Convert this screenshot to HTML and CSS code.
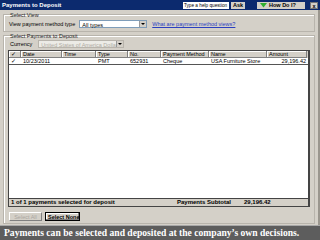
FILE: index.html
```html
<!DOCTYPE html>
<html lang="en">
<head>
	<meta charset="UTF-8">
	<title>Payments to Deposit</title>
	<link rel="stylesheet" href="styles.css">
</head>
<body>
	<div class="win">
		<div class="titlebar">
			<span class="title">Payments to Deposit</span>
			<span class="help">Type a help question</span>
			<span class="ask">Ask</span>
			<span class="howdo">
				<svg width="7" height="5" viewBox="0 0 7 5"><path d="M0 0 H7 L3.5 4.5 Z" fill="#2fae2f"/></svg>
				How Do I?
			</span>
			<span class="close">x</span>
		</div>
		<div class="body">
			<div class="group view">
				<div class="legend">Select View</div>
				<div class="row">
					<span>View payment method type</span>
					<span class="select">All types<i class="arrow"></i></span>
					<a class="link" href="#">What are payment method views?</a>
				</div>
			</div>
			<div class="group pay">
				<div class="legend">Select Payments to Deposit</div>
				<div class="row cur">
					<span>Currency</span>
					<span class="select off">United States of America Dollar<i class="arrow"></i></span>
				</div>
				<div class="grid">
					<div class="tr head">
						<span class="c0">&#10003;</span>
						<span class="c1">Date</span>
						<span class="c2">Time</span>
						<span class="c3">Type</span>
						<span class="c4">No.</span>
						<span class="c5">Payment Method</span>
						<span class="c6">Name</span>
						<span class="c7">Amount</span>
					</div>
					<div class="tr item">
						<span class="c0">&#10003;</span>
						<span class="c1">10/23/2011</span>
						<span class="c2"></span>
						<span class="c3">PMT</span>
						<span class="c4">652931</span>
						<span class="c5">Cheque</span>
						<span class="c6">USA Furniture Store</span>
						<span class="c7 num">29,196.42</span>
					</div>
					<div class="blank"></div>
					<div class="summary">
						<span class="count">1 of 1 payments selected for deposit</span>
						<span class="sub">Payments Subtotal</span>
						<span class="total">29,196.42</span>
					</div>
				</div>
				<div class="btns">
					<span class="btn off">Select All</span>
					<span class="btn on">Select <u>N</u>one</span>
				</div>
			</div>
		</div>
		<div class="caption">Payments can be selected and deposited at the company’s own decisions.</div>
	</div>
</body>
</html>
```
FILE: styles.css
```css
body{
	margin: 0;
	background: #d4d0c8;
	font-family: "Liberation Sans", Arial, sans-serif;
	font-size: 5.5px;
	color: #000;
}
.win{
	width: 320px;
	height: 240px;
	display: flex;
	flex-direction: column;
	overflow: hidden;
}
.titlebar{
	height: 10px;
	background: #0c2a6e;
	display: flex;
	align-items: center;
	padding: 0 2px;
	gap: 2px;
	white-space: nowrap;
}
.title{
	color: #fff;
	font-weight: bold;
	font-size: 6px;
	flex: 1;
}
.help{
	background: #fff;
	width: 46px;
	height: 7px;
	line-height: 7px;
	padding-left: 1px;
	box-sizing: border-box;
	font-size: 4.7px;
	overflow: hidden;
}
.ask{
	background: #d4d0c8;
	font-weight: bold;
	height: 7px;
	line-height: 7px;
	padding: 0 2px;
	margin-right: 10px;
}
.howdo{
	background: #d4d0c8;
	font-weight: bold;
	height: 7px;
	width: 48px;
	display: flex;
	align-items: center;
	gap: 2px;
	padding-left: 3px;
	box-sizing: border-box;
}
.close{
	background: #d4d0c8;
	width: 8px;
	height: 7px;
	line-height: 6px;
	text-align: center;
	margin-left: 3px;
	border: 1px solid #777;
	box-sizing: border-box;
	font-weight: bold;
}
.body{
	flex: 1;
	padding: 4px 3px 1px 3px;
	display: flex;
	flex-direction: column;
	gap: 3px;
	border-right: 2px solid #9a968e;
}
.group{
	border: 1px solid #b8b4ac;
	box-shadow: inset 1px 1px 0 #fff;
	padding: 0 4px 1px 4px;
}
.legend{
	margin-top: -3px;
	height: 7px;
	line-height: 7px;
	padding-left: 2px;
	color: #222;
}
.row{
	display: flex;
	align-items: center;
	gap: 4px;
	padding: 1px 0 2px 1px;
	white-space: nowrap;
}
.select{
	background: #fff;
	border: 1px solid #7f9db9;
	width: 68px;
	height: 8px;
	line-height: 8px;
	padding-left: 2px;
	box-sizing: border-box;
	position: relative;
}
.select .arrow{
	position: absolute;
	right: 0;
	top: 0;
	width: 6px;
	height: 6px;
	background: #d4d0c8;
	border-left: 1px solid #999;
}
.select .arrow:after{
	content: "";
	position: absolute;
	left: 1px;
	top: 2px;
	border-left: 2px solid transparent;
	border-right: 2px solid transparent;
	border-top: 2px solid #000;
}
.select.off{
	width: 86px;
	color: #b0aca4;
	border-color: #b8b4ac;
	background: #ecebe6;
}
.link{
	color: #2a3fc0;
	margin-left: 1px;
}
.pay{
	flex: 1;
	display: flex;
	flex-direction: column;
}
.cur{
	gap: 6px;
	padding: 0 0 2px 2px;
}
.grid{
	flex: 1;
	background: #fff;
	border: 1px solid #444;
	border-right-width: 2px;
	display: flex;
	flex-direction: column;
}
.tr{
	display: flex;
	height: 7px;
	line-height: 7px;
}
.tr span{
	padding-left: 2px;
	box-sizing: border-box;
	overflow: hidden;
	white-space: nowrap;
}
.head{
	background: #d4d0c8;
}
.head span{
	border-right: 1px solid #808080;
	border-bottom: 1px solid #808080;
	box-shadow: inset 1px 1px 0 #fff;
}
.item{
	border-bottom: 1px solid #555;
	height: 6px;
	line-height: 6px;
}
.c0{ width: 12px; }
.c1{ width: 41px; }
.c2{ width: 34px; }
.c3{ width: 32px; }
.c4{ width: 33px; }
.c5{ width: 48px; }
.c6{ width: 58px; }
.c7{ width: 40px; }
.num{
	text-align: right;
	padding-right: 1px;
}
.blank{
	flex: 1;
}
.summary{
	background: #d4d0c8;
	height: 7px;
	line-height: 7px;
	display: flex;
	font-weight: bold;
	font-size: 6px;
	border-top: 1px solid #444;
	white-space: nowrap;
}
.count{
	width: 166px;
	padding-left: 2px;
}
.sub{
	width: 67px;
}
.btns{
	display: flex;
	gap: 3px;
	padding: 5px 0 1px 1px;
	white-space: nowrap;
}
.btn{
	height: 9px;
	line-height: 8px;
	padding: 0 2px;
	box-sizing: border-box;
	text-align: center;
	border: 1px solid #fff;
	border-right-color: #808080;
	border-bottom-color: #808080;
}
.btn.off{
	width: 33px;
	color: #aaa6a0;
}
.btn.on{
	width: 35px;
	font-weight: bold;
	border: 1px solid #000;
	box-shadow: inset -1px -1px 0 #808080, inset 1px 1px 0 #fff;
}
.caption{
	height: 14px;
	line-height: 14px;
	background: #5d5d5d;
	border-top: 1px solid #a8a8a8;
	color: #fff;
	font-family: "Liberation Serif", "Times New Roman", serif;
	font-weight: bold;
	font-size: 9.6px;
	padding-left: 4px;
	white-space: nowrap;
}
```
